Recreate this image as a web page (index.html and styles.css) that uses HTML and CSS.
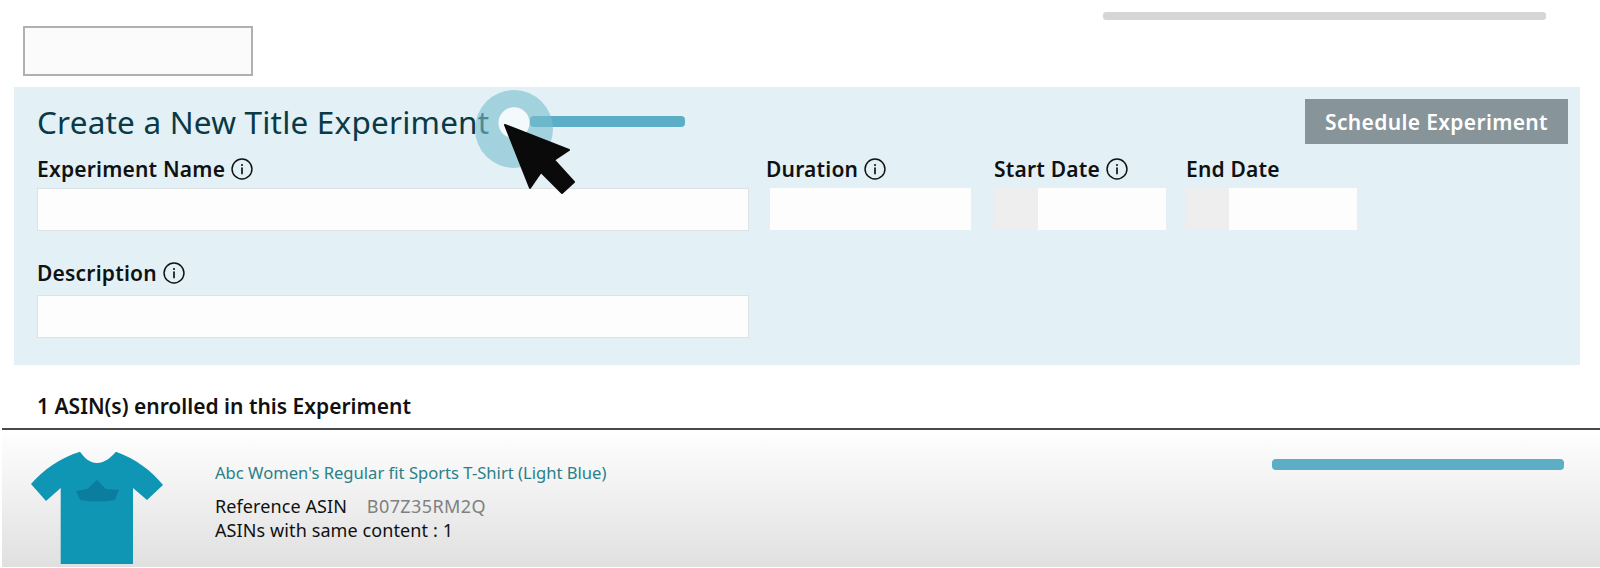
FILE: index.html
```html
<!DOCTYPE html>
<html lang="en">
<head>
    <meta charset="UTF-8">
    <title>Create a New Title Experiment</title>
    <link rel="stylesheet" href="styles.css">
</head>
<body>
    <svg class="icon-defs" width="0" height="0">
        <symbol id="info" viewBox="0 0 21 21">
            <circle cx="10.5" cy="10.5" r="9.5" fill="none" stroke="#111" stroke-width="1.4"/>
            <rect x="9.7" y="9" width="1.6" height="6.5" fill="#111"/>
            <rect x="9.7" y="5.8" width="1.6" height="1.8" fill="#111"/>
        </symbol>
    </svg>

    <div class="top-bar"><div class="top-line"></div></div>
    <div class="logo-box"></div>

    <!-- Experiment form -->
    <section class="panel">
        <div class="panel-head">
            <h1>Create a New Title Experiment</h1>
            <div class="title-line"></div>
            <button class="schedule-button">Schedule Experiment</button>
        </div>
        <div class="field-row">
            <div class="field field-name">
                <label>Experiment Name <svg class="info"><use href="#info"/></svg></label>
                <div class="input"></div>
            </div>
            <div class="field field-duration">
                <label>Duration <svg class="info"><use href="#info"/></svg></label>
                <div class="input"></div>
            </div>
            <div class="field field-start">
                <label>Start Date <svg class="info"><use href="#info"/></svg></label>
                <div class="date-input"><span class="date-icon"></span><span class="date-value"></span></div>
            </div>
            <div class="field field-end">
                <label>End Date</label>
                <div class="date-input"><span class="date-icon"></span><span class="date-value"></span></div>
            </div>
        </div>
        <div class="field field-desc">
            <label>Description <svg class="info"><use href="#info"/></svg></label>
            <div class="input"></div>
        </div>
    </section>

    <h2 class="enrolled">1 ASIN(s) enrolled in this Experiment</h2>

    <!-- Enrolled product -->
    <section class="item">
        <svg class="shirt" viewBox="30 451 135 116">
            <path fill="#0f96b4" d="M80 452.7C84 458 89 464 97 464C105 464 111 458 116 452.7C136 460 152 472 163 486L147 501L133 489V565H60.7V489L46 502L31 485C43 471 60 459 80 452.7Z"/>
            <path fill="#0b7e9f" d="M76 492L87 490L97 481L106 490L119 491L115 501Q97 504 80 501Z"/>
        </svg>
        <div class="item-text">
            <a class="item-title">Abc Women's Regular fit Sports T-Shirt (Light Blue)</a>
            <p class="item-ref">Reference ASIN <span>B07Z35RM2Q</span></p>
            <p class="item-count">ASINs with same content : 1</p>
        </div>
        <div class="item-line"></div>
    </section>

    <!-- Click marker and pointer over the heading -->
    <div class="click-ring"></div>
    <svg class="pointer" viewBox="500 120 80 80">
        <path fill="#0a0a0a" stroke="#0a0a0a" stroke-width="2" stroke-linejoin="round" d="M505 125L569 150L554 160L574 182L562 193L541 172L530 188Z"/>
    </svg>
</body>
</html>
```

FILE: styles.css
```css
body {
    margin: 0;
    height: 568px;
    overflow: hidden;
    background-color: #ffffff;
    font-family: "Noto Sans", sans-serif;
    color: #111111;
    position: relative;
}

.icon-defs {
    position: absolute;
}

/* Top of the page */
.top-bar {
    display: flex;
    justify-content: flex-end;
    padding: 12px 54px 0 0;
}

.top-line {
    width: 443px;
    height: 8px;
    background-color: #d6d6d6;
    border-radius: 3px;
}

.logo-box {
    width: 226px;
    height: 46px;
    margin: 6px 0 0 23px;
    background-color: #fbfbfb;
    border: 2px solid #b0b0b0;
}

/* Form panel */
.panel {
    height: 278px;
    margin: 11px 20px 0 14px;
    padding: 12px 12px 0 23px;
    box-sizing: border-box;
    background-color: #e3f1f6;
}

.panel-head {
    display: flex;
    align-items: center;
    height: 45px;
}

h1 {
    width: 493px;
    margin: 0;
    font-size: 31.5px;
    font-weight: 400;
    color: #0a3a46;
    letter-spacing: 0.2px;
    white-space: nowrap;
}

.title-line {
    width: 155px;
    height: 11px;
    background-color: #5baec6;
    border-radius: 4px;
}

.schedule-button {
    margin-left: auto;
    width: 263px;
    height: 45px;
    padding: 1px 0 0;
    border: none;
    background-color: #87949a;
    color: #ffffff;
    font-family: inherit;
    font-size: 21px;
    font-weight: 600;
    letter-spacing: 0.35px;
}

.field-row {
    display: flex;
    margin-top: 12px;
}

.field label {
    display: flex;
    align-items: center;
    gap: 6px;
    height: 26px;
    margin-bottom: 6px;
    font-size: 21px;
    font-weight: 600;
    letter-spacing: 0.2px;
    white-space: nowrap;
}

.info {
    width: 22px;
    height: 22px;
}

.input {
    height: 41px;
    background-color: #fdfdfd;
    border: 1px solid #dde2e4;
}

.field-name {
    width: 712px;
    margin-right: 17px;
}

.field-name .input,
.field-desc .input {
    width: 710px;
}

.field-duration {
    width: 205px;
    margin-right: 23px;
}

.field-duration .input {
    margin-left: 4px;
    border: none;
    height: 42px;
}

.field-start {
    width: 172px;
    margin-right: 20px;
}

.field-start .date-icon {
    width: 44px;
}

.field-end {
    width: 171px;
}

.date-input {
    display: flex;
    height: 42px;
}

.date-icon {
    width: 43px;
    background-color: #eeeeee;
}

.date-value {
    flex: 1;
    background-color: #fdfdfd;
}

.field-desc {
    margin-top: 29px;
}

.field-desc label {
    margin-bottom: 9px;
}

/* Enrolled list */
.enrolled {
    margin: 27px 0 0 37px;
    height: 36px;
    font-size: 21px;
    font-weight: 600;
}

.item {
    display: flex;
    height: 139px;
    margin-left: 2px;
    padding: 21px 36px 0 28px;
    box-sizing: border-box;
    border-top: 2px solid #4a4a4a;
    background: linear-gradient(#ffffff, #e0e0e0);
}

.shirt {
    width: 135px;
    height: 116px;
    margin-top: -1px;
    flex-shrink: 0;
}

.item-text {
    margin-left: 50px;
    font-size: 18px;
    letter-spacing: 0.1px;
}

.item-title {
    display: block;
    font-size: 16.6px;
    letter-spacing: 0;
    color: #2a7f88;
    margin-top: 10px;
}

.item-ref {
    margin: 10px 0 0;
}

.item-ref span {
    margin-left: 15px;
    color: #808080;
    letter-spacing: 0.4px;
}

.item-count {
    margin: 0;
}

.item-line {
    width: 292px;
    height: 11px;
    margin: 8px 0 0 auto;
    background-color: #5baec6;
    border-radius: 4px;
}

/* Overlay: click marker and pointer */
.click-ring {
    position: absolute;
    left: 475px;
    top: 90px;
    width: 78px;
    height: 78px;
    border-radius: 50%;
    background: radial-gradient(circle at 50% 42%, #f4fafb 0, #f4fafb 15px, rgba(120, 190, 205, 0.6) 16px);
}

.pointer {
    position: absolute;
    left: 500px;
    top: 120px;
    width: 80px;
    height: 80px;
}
```
